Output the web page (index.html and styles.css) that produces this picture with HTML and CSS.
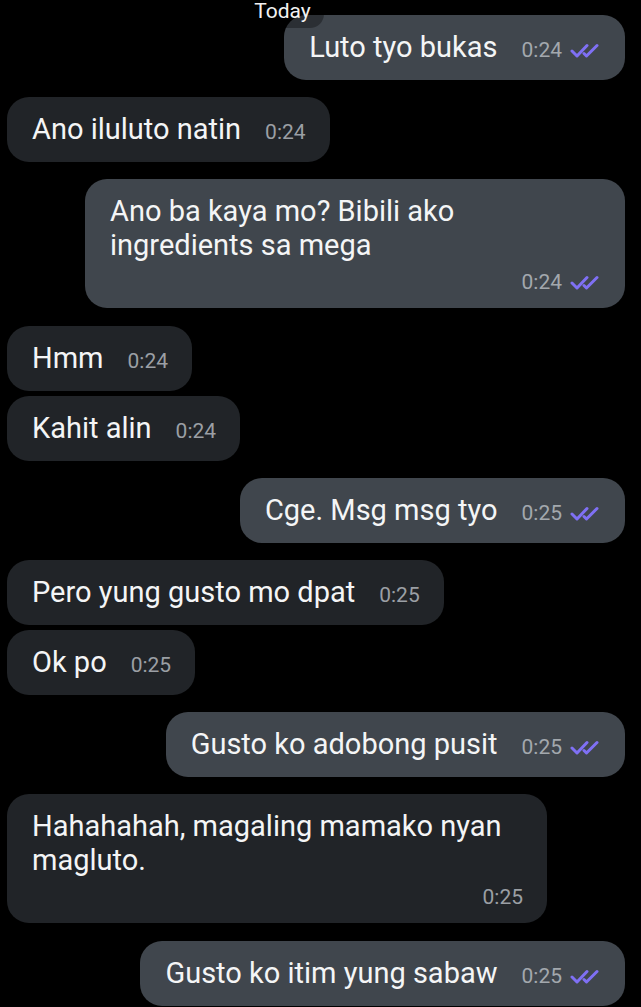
FILE: index.html
```html
<!DOCTYPE html>
<html>
<head>
<meta charset="utf-8">
<link rel="stylesheet" href="styles.css">
</head>
<body>
<div class="chat">
  <div class="date"><span class="date-pill">Today</span></div>

  <div class="msg out">
    <span class="text">Luto tyo bukas</span><span class="meta">0:24<svg class="ticks" viewBox="0 0 30 15"><path d="M2 8 L7 13 L17 2.5 M14 10.5 L16.5 13 L27 2.5"/></svg></span>
  </div>

  <div class="msg in group">
    <span class="text">Ano iluluto natin</span><span class="meta">0:24</span>
  </div>

  <div class="msg out group multi">
    <div class="text">Ano ba kaya mo? Bibili ako ingredients sa mega</div>
    <div class="meta">0:24<svg class="ticks" viewBox="0 0 30 15"><path d="M2 8 L7 13 L17 2.5 M14 10.5 L16.5 13 L27 2.5"/></svg></div>
  </div>

  <div class="msg in group">
    <span class="text">Hmm</span><span class="meta">0:24</span>
  </div>

  <div class="msg in same">
    <span class="text">Kahit alin</span><span class="meta">0:24</span>
  </div>

  <div class="msg out group">
    <span class="text">Cge. Msg msg tyo</span><span class="meta">0:25<svg class="ticks" viewBox="0 0 30 15"><path d="M2 8 L7 13 L17 2.5 M14 10.5 L16.5 13 L27 2.5"/></svg></span>
  </div>

  <div class="msg in group">
    <span class="text">Pero yung gusto mo dpat</span><span class="meta">0:25</span>
  </div>

  <div class="msg in same">
    <span class="text">Ok po</span><span class="meta">0:25</span>
  </div>

  <div class="msg out group">
    <span class="text">Gusto ko adobong pusit</span><span class="meta">0:25<svg class="ticks" viewBox="0 0 30 15"><path d="M2 8 L7 13 L17 2.5 M14 10.5 L16.5 13 L27 2.5"/></svg></span>
  </div>

  <div class="msg in group multi">
    <div class="text">Hahahahah, magaling mamako nyan magluto.</div>
    <div class="meta">0:25</div>
  </div>

  <div class="msg out group">
    <span class="text">Gusto ko itim yung sabaw</span><span class="meta">0:25<svg class="ticks" viewBox="0 0 30 15"><path d="M2 8 L7 13 L17 2.5 M14 10.5 L16.5 13 L27 2.5"/></svg></span>
  </div>
</div>
</body>
</html>
```

FILE: styles.css
```css
html, body {
  margin: 0;
  padding: 0;
  background: #000;
  height: 100%;
  overflow: hidden;
}

body {
  font-family: Roboto, "Noto Sans", "Liberation Sans", sans-serif;
  color: #f4f5f6;
}

.chat {
  display: flex;
  flex-direction: column;
  padding: 0 16px 0 7px;
}

.date {
  display: flex;
  justify-content: center;
  padding-right: 67px;
  margin-top: -12px;
  margin-bottom: -13px;
  position: relative;
  z-index: 1;
}

.date-pill {
  display: block;
  height: 40px;
  padding: 0 13px;
  font-size: 21px;
  line-height: 46px;
  color: #f2f2f2;
  background: rgba(0, 0, 0, 0.32);
  border-radius: 14px;
}

.msg {
  box-sizing: border-box;
  max-width: 540px;
  height: 65px;
  padding: 15px 25px 16px 25px;
  border-radius: 22px;
  font-size: 29px;
  line-height: 34px;
  white-space: nowrap;
}

.msg.out {
  align-self: flex-end;
  background: #40464d;
}

.msg.in {
  align-self: flex-start;
  background: #212428;
  padding-right: 24px;
}

.msg.group {
  margin-top: 17.2px;
}

.msg.same {
  margin-top: 5px;
}

.msg .meta {
  font-size: 21px;
  line-height: 20px;
  color: #a3a8ad;
  margin-left: 24px;
}

.msg.in .meta {
  color: #9b9fa4;
}

.ticks {
  width: 30px;
  height: 15px;
  margin-left: 8px;
  vertical-align: -1px;
  fill: none;
  stroke: #7f70f4;
  stroke-width: 3;
  stroke-linecap: round;
  stroke-linejoin: round;
}

.msg.multi {
  width: 540px;
  height: 129px;
  white-space: normal;
  padding-bottom: 13px;
}

.msg.multi .text {
  display: block;
}

.msg.multi .meta {
  display: block;
  text-align: right;
  margin-left: 0;
  margin-top: 7px;
  line-height: 26px;
}
```
